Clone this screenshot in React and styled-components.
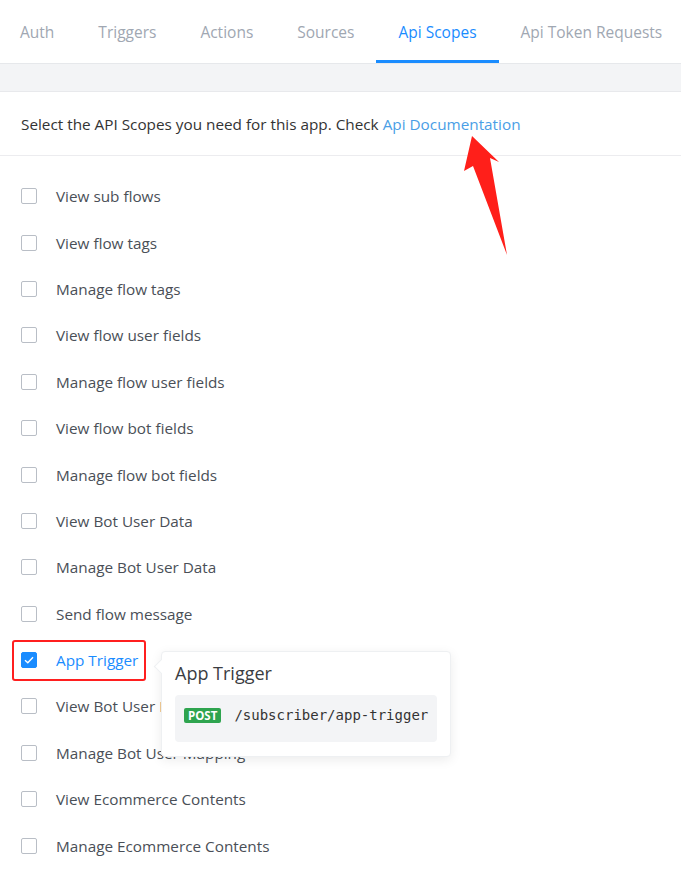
import React from "react";
import styled, { createGlobalStyle } from "styled-components";

const GlobalStyle = createGlobalStyle`
  body {
    margin: 0;
    background: #fff;
    font-family: "Open Sans", "Noto Sans", Arial, sans-serif;
  }
`;

const Page = styled.div`
  position: relative;
  width: 681px;
  min-height: 869px;
  overflow: hidden;
  background: #fff;
`;

const Tabs = styled.nav`
  display: flex;
  height: 64px;
  margin-left: -2px;
  border-bottom: 1px solid #e6e8eb;
  box-sizing: border-box;
`;

const Tab = styled.div`
  display: flex;
  align-items: center;
  padding: 0 22px;
  font-size: 15.5px;
  white-space: nowrap;
  color: ${(p) => (p.active ? "#1a8cff" : "#a0a7b2")};
  box-shadow: ${(p) => (p.active ? "inset 0 -3px 0 #1a8cff" : "none")};
`;

const Band = styled.div`
  height: 27px;
  background: #f3f4f6;
  border-bottom: 1px solid #e8e9ec;
`;

const Intro = styled.p`
  margin: 0;
  height: 63px;
  display: flex;
  align-items: center;
  padding-left: 21px;
  font-size: 15.3px;
  color: #333;
  border-bottom: 1px solid #ececef;
`;

const DocLink = styled.a`
  color: #4a9ee6;
  text-decoration: none;
  margin-left: 4px;
`;

const List = styled.ul`
  list-style: none;
  margin: 0;
  padding: 17px 0 0;
`;

const Row = styled.li`
  position: relative;
  height: 46.4px;
  display: flex;
  align-items: center;
  padding-left: 12px;
`;

const Label = styled.label`
  display: inline-flex;
  align-items: center;
  gap: 19px;
  height: 41px;
  padding: 0 6px 0 7px;
  box-sizing: border-box;
  border: 2px solid ${(p) => (p.highlight ? "#ff1f1f" : "transparent")};
  border-radius: 3px;
  font-size: 15.3px;
  color: ${(p) => (p.checked ? "#1a8cff" : "#4a4f57")};
`;

const Box = styled.span`
  width: 16px;
  height: 16px;
  box-sizing: border-box;
  border-radius: 2px;
  border: 1px solid ${(p) => (p.checked ? "#1a8cff" : "#b9bec6")};
  background: ${(p) => (p.checked ? "#1a8cff" : "#fff")};
  display: flex;
  align-items: center;
  justify-content: center;
`;

const Popover = styled.div`
  position: absolute;
  left: 161px;
  top: 14px;
  z-index: 2;
  width: 290px;
  height: 106px;
  box-sizing: border-box;
  padding: 9px 13px 0;
  background: #fff;
  border: 1px solid #eef0f2;
  border-radius: 4px;
  box-shadow: 0 3px 12px rgba(0, 0, 0, 0.08);

  &::before {
    content: "";
    position: absolute;
    left: -6px;
    top: 9px;
    width: 10px;
    height: 10px;
    background: #fff;
    border-left: 1px solid #eef0f2;
    border-bottom: 1px solid #eef0f2;
    transform: rotate(45deg);
  }
`;

const PopTitle = styled.div`
  font-size: 18px;
  color: #3a3d42;
  line-height: 24px;
`;

const Endpoint = styled.div`
  margin-top: 10px;
  height: 47px;
  display: flex;
  align-items: center;
  gap: 13px;
  padding: 0 0 6px 9px;
  box-sizing: border-box;
  background: #f3f4f6;
  border-radius: 4px;
`;

const Method = styled.span`
  background: #2ea44f;
  color: #fff;
  font-size: 11.5px;
  font-weight: 700;
  line-height: 15px;
  padding: 0 4px;
  border-radius: 2px;
`;

const Path = styled.code`
  font-family: "DejaVu Sans Mono", "Liberation Mono", monospace;
  font-size: 14px;
  color: #333;
`;

const Pointer = styled.svg`
  position: absolute;
  left: 0;
  top: 0;
  pointer-events: none;
  z-index: 3;
`;

const tabs = ["Auth", "Triggers", "Actions", "Sources", "Api Scopes", "Api Token Requests"];

const scopes = [
  "View sub flows",
  "View flow tags",
  "Manage flow tags",
  "View flow user fields",
  "Manage flow user fields",
  "View flow bot fields",
  "Manage flow bot fields",
  "View Bot User Data",
  "Manage Bot User Data",
  "Send flow message",
  "App Trigger",
  "View Bot User Mapping",
  "Manage Bot User Mapping",
  "View Ecommerce Contents",
  "Manage Ecommerce Contents",
];

const Check = () => (
  <svg width="10" height="8" viewBox="0 0 10 8">
    <path d="M1 4.2 L3.8 6.8 L9 1.2" fill="none" stroke="#fff" strokeWidth="1.4" />
  </svg>
);

export default function App() {
  return (
    <Page>
      <GlobalStyle />
      <Tabs>
        {tabs.map((t) => (
          <Tab key={t} active={t === "Api Scopes"}>
            {t}
          </Tab>
        ))}
      </Tabs>
      <Band />
      <Intro>
        Select the API Scopes you need for this app. Check
        <DocLink href="#">Api Documentation</DocLink>
      </Intro>
      <List>
        {scopes.map((s) => {
          const on = s === "App Trigger";
          return (
            <Row key={s}>
              <Label checked={on} highlight={on}>
                <Box checked={on}>{on && <Check />}</Box>
                {s}
              </Label>
              {on && (
                <Popover>
                  <PopTitle>App Trigger</PopTitle>
                  <Endpoint>
                    <Method>POST</Method>
                    <Path>/subscriber/app-trigger</Path>
                  </Endpoint>
                </Popover>
              )}
            </Row>
          );
        })}
      </List>
      <Pointer width="681" height="869">
        <polygon
          points="472,136 499,162 490,158 507,255 473,166 464,171"
          fill="#ff1f1a"
        />
      </Pointer>
    </Page>
  );
}
